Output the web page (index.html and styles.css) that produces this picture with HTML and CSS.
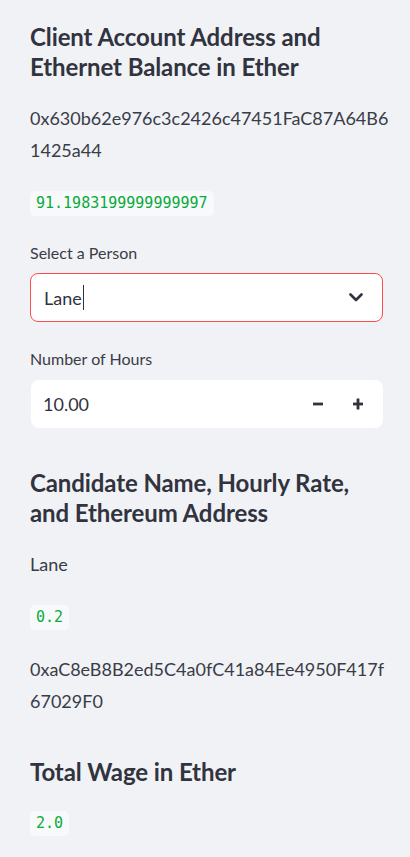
FILE: index.html
```html
<!DOCTYPE html>
<html lang="en">
<head>
<meta charset="utf-8">
<title>Sidebar</title>
<link rel="stylesheet" href="styles.css">
</head>
<body>
<aside class="sidebar">
  <h2 class="heading heading-first">Client Account Address and Ethernet Balance in Ether</h2>
  <p class="text addr">0x630b62e976c3c2426c47451FaC87A64B6<br>1425a44</p>
  <div class="code-row"><code class="code">91.1983199999999997</code></div>

  <label class="label label-first">Select a Person</label>
  <div class="select">
    <span class="select-value">Lane<span class="caret"></span></span>
    <svg class="chevron" width="14" height="9" viewBox="0 0 14 9"><path d="M1.5 1.5 L7 7 L12.5 1.5" fill="none" stroke="#31333f" stroke-width="2.6" stroke-linecap="round" stroke-linejoin="round"/></svg>
  </div>

  <label class="label">Number of Hours</label>
  <div class="number">
    <span class="number-value">10.00</span>
    <div class="steppers">
      <button class="step"><svg width="12" height="12" viewBox="0 0 12 12"><rect x="1" y="4.6" width="10" height="2.8" fill="#31333f"/></svg></button>
      <button class="step"><svg width="12" height="12" viewBox="0 0 12 12"><rect x="1" y="4.6" width="10" height="2.8" fill="#31333f"/><rect x="4.6" y="0.5" width="2.8" height="11" fill="#31333f"/></svg></button>
    </div>
  </div>

  <h2 class="heading heading-mid">Candidate Name, Hourly Rate, and Ethereum Address</h2>
  <p class="text name">Lane</p>
  <div class="code-row"><code class="code">0.2</code></div>
  <p class="text addr addr2">0xaC8eB8B2ed5C4a0fC41a84Ee4950F417f<br>67029F0</p>

  <h2 class="heading heading-mid heading-last">Total Wage in Ether</h2>
  <div class="code-row"><code class="code">2.0</code></div>
</aside>
</body>
</html>
```
FILE: styles.css
```css
html, body {
  margin: 0;
  padding: 0;
  background: #f0f2f6;
}
body {
  font-family: "Lato", "Noto Sans", sans-serif;
  color: #31333f;
}
.sidebar {
  display: flex;
  flex-direction: column;
  align-items: stretch;
  padding: 0 27px 0 30px;
  width: 353px;
}
.heading {
  font-size: 24px;
  font-weight: 700;
  line-height: 30px;
  margin: 0;
  color: #31333f;
  letter-spacing: -0.1px;
}
.heading-first { margin-top: 22px; }
.heading-mid { margin-top: 40px; }
.text {
  font-size: 18px;
  line-height: 32px;
  margin: 20px 0 0;
  color: #3a3c47;
}
.code-row {
  display: flex;
  margin-top: 25px;
}
.code {
  font-family: "DejaVu Sans Mono", "Liberation Mono", monospace;
  font-size: 15px;
  line-height: 25px;
  height: 25px;
  padding: 0 6px;
  background: #f8f9fb;
  color: #09ab3b;
  border-radius: 5px;
}
.addr2 { margin-top: 23px; }
.heading-last + .code-row { margin-top: 24px; }
.label {
  display: block;
  font-size: 16px;
  line-height: 20px;
  margin-top: 27px;
  margin-bottom: 10px;
  color: #3a3c47;
}
.select {
  height: 49px;
  box-sizing: border-box;
  border: 1px solid #ff4b4b;
  border-radius: 8px;
  background: #ffffff;
  display: flex;
  align-items: center;
  justify-content: space-between;
  padding: 0 19px 0 13px;
}
.select-value {
  font-size: 18px;
  display: flex;
  align-items: center;
}
.caret {
  display: inline-block;
  width: 1px;
  height: 25px;
  background: #31333f;
  margin-left: 1px;
}
.chevron { display: block; }
.number {
  height: 48px;
  border-radius: 8px;
  background: #ffffff;
  display: flex;
  align-items: center;
  justify-content: space-between;
  padding: 0 5px 0 12px;
  margin-left: 1px;
}
.label + .number { margin-top: 1px; }
.number-value { font-size: 18px; }
.steppers { display: flex; }
.step {
  border: 0;
  background: transparent;
  width: 40px;
  height: 48px;
  padding: 0;
  display: flex;
  align-items: center;
  justify-content: center;
}
.step svg { display: block; }
```
